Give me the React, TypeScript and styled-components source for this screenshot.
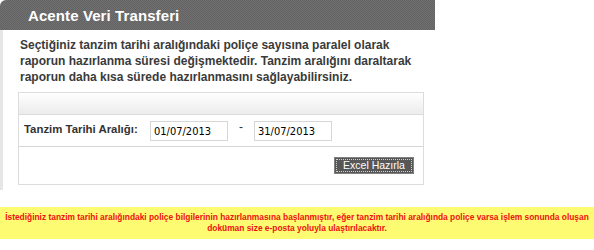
import React from "react";
import styled, { createGlobalStyle } from "styled-components";

const Global = createGlobalStyle`
  html, body { margin: 0; padding: 0; background: #fff; }
  body { font-family: "Liberation Sans", Arial, sans-serif; width: 594px; }
`;

const Panel = styled.div`
  width: 435px;
`;

const Header = styled.div`
  height: 30px;
  border-radius: 6px 0 0 0;
  background: repeating-conic-gradient(#717171 0 25%, #626262 0 50%) 0 0 / 2px 2px;
  display: flex;
  align-items: center;
  padding-left: 28px;
  box-sizing: border-box;
`;

const Title = styled.h1`
  margin: 0;
  font-size: 15px;
  font-weight: bold;
  color: #fff;
  letter-spacing: 0.1px;
`;

const Content = styled.div`
  border-left: 3px solid #e6e6e6;
  padding: 7px 0 5px 15px;
`;

const Intro = styled.p`
  margin: 0 0 7px 2px;
  font-size: 12px;
  font-weight: bold;
  line-height: 16px;
  color: #3a3a3a;
  white-space: nowrap;
`;

const FormBox = styled.div`
  width: 406px;
  box-sizing: border-box;
  border: 1px solid #dcdcdc;
`;

const BoxHead = styled.div`
  height: 21px;
  border-bottom: 1px solid #dcdcdc;
  background: linear-gradient(#ffffff, #f7f7f7 40%, #ececec);
`;

const FieldRow = styled.div`
  height: 31px;
  border-bottom: 1px solid #d4d4d4;
  display: flex;
  align-items: center;
  padding-left: 5px;
`;

const Label = styled.label`
  width: 126px;
  font-size: 11.4px;
  font-weight: bold;
  color: #333;
  margin-top: -4px;
  white-space: nowrap;
`;

const DateInput = styled.input`
  width: 78px;
  height: 20px;
  box-sizing: border-box;
  border: 1px solid #d6d6d6;
  padding: 2px 0 0 3px;
  font-family: "DejaVu Sans Condensed", "DejaVu Sans", sans-serif;
  font-size: 11px;
  color: #000;
  outline: none;
`;

const Dash = styled.span`
  width: 26px;
  text-align: center;
  font-size: 12px;
  color: #333;
  margin-top: -8px;
`;

const ActionRow = styled.div`
  height: 37px;
  display: flex;
  justify-content: flex-end;
  align-items: flex-start;
  padding: 10px 9px 0 0;
  box-sizing: border-box;
`;

const Button = styled.button`
  width: 80px;
  height: 17px;
  padding: 0;
  background: #575757;
  border: 1px solid #808080;
  color: #fff;
  font-family: "Liberation Sans", Arial, sans-serif;
  font-size: 10.5px;
  line-height: 13px;
  outline: 1px dotted #d0d0d0;
  outline-offset: -3px;
  cursor: pointer;
`;

const Notice = styled.div`
  margin-top: 17px;
  height: 32px;
  background: #fdfb72;
  display: flex;
  align-items: center;
  justify-content: center;
  text-align: center;
  font-size: 8.4px;
  font-weight: bold;
  line-height: 11px;
  color: #f01010;
  white-space: nowrap;
`;

export default function App() {
  return (
    <>
      <Global />
      <Panel>
        <Header>
          <Title>Acente Veri Transferi</Title>
        </Header>
        <Content>
          <Intro>
            Seçtiğiniz tanzim tarihi aralığındaki poliçe sayısına paralel olarak
            <br />
            raporun hazırlanma süresi değişmektedir. Tanzim aralığını daraltarak
            <br />
            raporun daha kısa sürede hazırlanmasını sağlayabilirsiniz.
          </Intro>
          <FormBox>
            <BoxHead />
            <FieldRow>
              <Label>Tanzim Tarihi Aralığı:</Label>
              <DateInput defaultValue="01/07/2013" />
              <Dash>-</Dash>
              <DateInput defaultValue="31/07/2013" />
            </FieldRow>
            <ActionRow>
              <Button>Excel Hazırla</Button>
            </ActionRow>
          </FormBox>
        </Content>
      </Panel>
      <Notice>
        <div>
          İstediğiniz tanzim tarihi aralığındaki poliçe bilgilerinin hazırlanmasına başlanmıştır, eğer tanzim tarihi aralığında poliçe varsa işlem sonunda oluşan
          <br />
          doküman size e-posta yoluyla ulaştırılacaktır.
        </div>
      </Notice>
    </>
  );
}
